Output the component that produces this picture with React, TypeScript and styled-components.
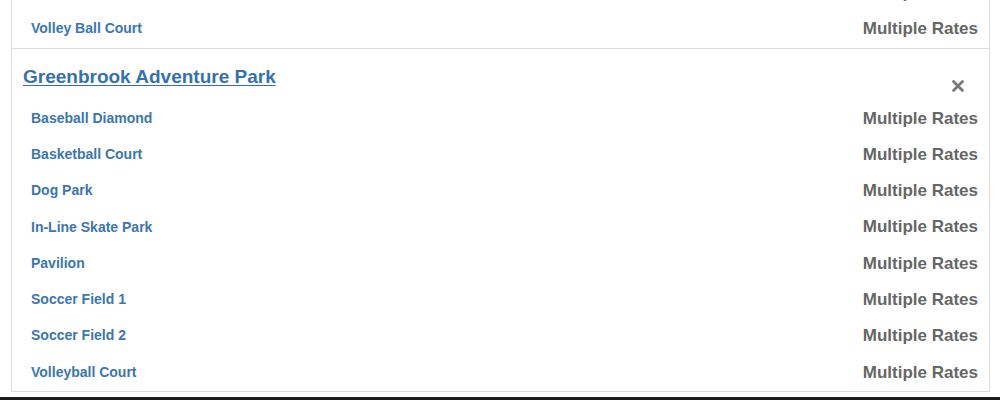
import React from 'react';
import styled, { createGlobalStyle } from 'styled-components';

const GlobalStyle = createGlobalStyle`
  html, body {
    margin: 0;
    padding: 0;
    background: #fff;
  }
  body {
    font-family: "Liberation Sans", Arial, Helvetica, sans-serif;
    overflow: hidden;
  }
`;

const Page = styled.div`
  height: 400px;
  overflow: hidden;
  display: flex;
  flex-direction: column;
`;

// the list is scrolled a bit, so the first card is cut at the top
const ListWrap = styled.div`
  margin: -26px 10px 0 11px;
`;

const Card = styled.section`
  border: 1px solid #ddd;
  background: #fff;
  & + & {
    border-top: 0;
  }
`;

const CardHead = styled.div`
  display: flex;
  justify-content: space-between;
  padding: 14px 22px 0 11px;
`;

const ParkTitle = styled.a`
  font-size: 19px;
  font-weight: bold;
  line-height: 28px;
  margin-bottom: 10px;
  color: #3572ad;
  text-decoration: underline;
  text-underline-offset: 2px;
  cursor: pointer;
`;

const CloseBtn = styled.button`
  align-self: flex-end;
  margin-bottom: 6px;
  width: 18px;
  height: 18px;
  padding: 0;
  border: 0;
  background: none;
  color: #777;
  display: flex;
  align-items: center;
  justify-content: center;
  cursor: pointer;
`;

const Row = styled.div`
  display: flex;
  justify-content: space-between;
  align-items: center;
  padding: 6px 11px 6px 19px;
  line-height: 1.42857;
`;

const Facility = styled.a`
  font-size: 14px;
  font-weight: bold;
  color: #3a76b0;
  cursor: pointer;
`;

const Rate = styled.span`
  font-size: 17px;
  font-weight: bold;
  color: #666;
`;

const Footer = styled.div`
  margin-top: 5px;
  border-top: 3px solid #1c1c1c;
  height: 20px;
`;

const XIcon = () => (
  <svg width="18" height="18" viewBox="0 0 24 24" fill="none" stroke="currentColor" strokeWidth="3.6" strokeLinecap="round">
    <path d="M18 6 6 18" />
    <path d="m6 6 12 12" />
  </svg>
);

const prevList = ['Tennis Court', 'Volley Ball Court'];
const greenbrook = [
  'Baseball Diamond',
  'Basketball Court',
  'Dog Park',
  'In-Line Skate Park',
  'Pavilion',
  'Soccer Field 1',
  'Soccer Field 2',
  'Volleyball Court',
];

const App: React.FC = () => {
  return (
    <Page>
      <GlobalStyle />
      <ListWrap>
        <Card>
          {prevList.map((name) => (
            <Row key={name}>
              <Facility>{name}</Facility>
              <Rate>Multiple Rates</Rate>
            </Row>
          ))}
        </Card>
        <Card>
          <CardHead>
            <ParkTitle>Greenbrook Adventure Park</ParkTitle>
            <CloseBtn aria-label="close">
              <XIcon />
            </CloseBtn>
          </CardHead>
          {greenbrook.map((name) => (
            <Row key={name}>
              <Facility>{name}</Facility>
              <Rate>Multiple Rates</Rate>
            </Row>
          ))}
        </Card>
      </ListWrap>
      <Footer />
    </Page>
  );
};

export default App;
